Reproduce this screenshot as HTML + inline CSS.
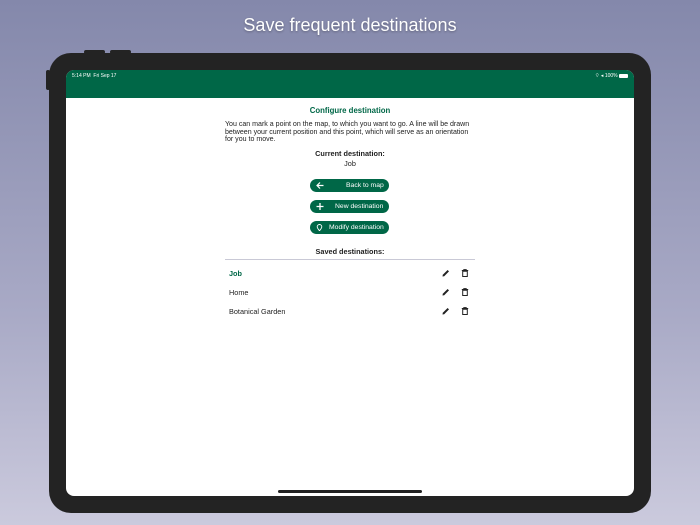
<!DOCTYPE html>
<html><head><style>
*{margin:0;padding:0;box-sizing:border-box}
body{width:700px;height:525px;overflow:hidden;background:linear-gradient(#8488ab,#a9aac6 60%,#cbcadd);font-family:"Liberation Sans",sans-serif;position:relative}
.title{position:absolute;top:15px;width:700px;text-align:center;color:#fff;font-size:18px;text-shadow:0 1px 2px rgba(0,0,0,.3)}
.dev{position:absolute;left:49px;top:53px;width:602px;height:460px;background:#232323;border-radius:22px}
.btnt{position:absolute;top:50px;height:4px;width:21px;background:#232323;border-radius:2px}
.side{position:absolute;left:46px;top:70px;width:4px;height:20px;background:#232323;border-radius:2px}
.scr{position:absolute;left:66px;top:70px;width:568px;height:426px;background:#fff;border-radius:8px;overflow:hidden}
.hdr{height:28px;background:#006747;color:#fff;font-size:5px;position:relative}
.hdr .l{position:absolute;left:6px;top:3px}.hdr .r{position:absolute;right:6px;top:3px}
.c{position:absolute;left:159px;width:250px;font-size:7.3px;color:#222}
.btn{position:absolute;left:244px;width:79px;height:13px;border-radius:7px;background:#006747;color:#fff;font-size:6.8px;line-height:14px}
.btn svg{position:absolute;left:6px;top:3px}
.row{position:absolute;left:163px;font-size:7.3px;color:#222}
.ic{position:absolute}
.bar{position:absolute;left:212px;top:420px;width:144px;height:3px;border-radius:2px;background:#222}
</style></head><body>
<div class="title">Save frequent destinations</div>
<div class="btnt" style="left:84px"></div><div class="btnt" style="left:110px"></div>
<div class="side"></div>
<div class="dev"></div>
<div class="scr">
<div class="hdr"><span class="l">5:14 PM &nbsp;Fri Sep 17</span><span class="r">⌔ ◂ 100% <span style="display:inline-block;width:9px;height:4px;background:#fff;border-radius:1px;vertical-align:middle"></span></span></div>
<div class="c" style="top:36px;text-align:center;color:#006747;font-weight:bold;font-size:7.8px">Configure destination</div>
<div class="c" style="top:51px;line-height:7.6px;font-size:7.05px;width:252px">You can mark a point on the map, to which you want to go. A line will be drawn between your current position and this point, which will serve as an orientation for you to move.</div>
<div class="c" style="top:79px;text-align:center;font-weight:bold">Current destination:</div>
<div class="c" style="top:89px;text-align:center">Job</div>
<div class="btn" style="top:109px"><svg width="8" height="7" viewBox="0 0 8 7"><path d="M7.5 3.5H1M4 0.5L1 3.5L4 6.5" stroke="#fff" stroke-width="1.2" fill="none"/></svg><span style="position:absolute;left:36px">Back to map</span></div>
<div class="btn" style="top:130px"><svg width="8" height="7" viewBox="0 0 8 7"><path d="M4 0V7M0.5 3.5H7.5" stroke="#fff" stroke-width="1.3"/></svg><span style="position:absolute;left:25px">New destination</span></div>
<div class="btn" style="top:151px"><svg width="7" height="7" viewBox="0 0 7 7"><path d="M3.5 6.8C2 5 1.2 4 1.2 2.8A2.3 2.3 0 0 1 5.8 2.8C5.8 4 5 5 3.5 6.8Z" stroke="#fff" stroke-width="0.9" fill="none"/></svg><span style="position:absolute;left:19px">Modify destination</span></div>
<div class="c" style="top:177px;text-align:center;font-weight:bold">Saved destinations:</div>
<div style="position:absolute;left:159px;top:189px;width:250px;height:1px;background:#c9c9d6"></div>
<div class="row" style="top:199px;color:#006747;font-weight:bold">Job</div>
<div class="row" style="top:218px">Home</div>
<div class="row" style="top:237px">Botanical Garden</div>
<svg class="ic" style="left:376px;top:199px" width="8" height="8" viewBox="0 0 8 8"><path d="M0.5 7.5L0.8 5.8L5.6 1L7 2.4L2.2 7.2Z" fill="#222"/></svg>
<svg class="ic" style="left:395px;top:199px" width="8" height="8" viewBox="0 0 8 8"><path d="M0.8 1.5H7.2M2.8 1.5V0.6H5.2V1.5M1.7 2.3H6.3V7.5H1.7Z" stroke="#222" stroke-width="1" fill="none"/></svg>
<svg class="ic" style="left:376px;top:218px" width="8" height="8" viewBox="0 0 8 8"><path d="M0.5 7.5L0.8 5.8L5.6 1L7 2.4L2.2 7.2Z" fill="#222"/></svg>
<svg class="ic" style="left:395px;top:218px" width="8" height="8" viewBox="0 0 8 8"><path d="M0.8 1.5H7.2M2.8 1.5V0.6H5.2V1.5M1.7 2.3H6.3V7.5H1.7Z" stroke="#222" stroke-width="1" fill="none"/></svg>
<svg class="ic" style="left:376px;top:237px" width="8" height="8" viewBox="0 0 8 8"><path d="M0.5 7.5L0.8 5.8L5.6 1L7 2.4L2.2 7.2Z" fill="#222"/></svg>
<svg class="ic" style="left:395px;top:237px" width="8" height="8" viewBox="0 0 8 8"><path d="M0.8 1.5H7.2M2.8 1.5V0.6H5.2V1.5M1.7 2.3H6.3V7.5H1.7Z" stroke="#222" stroke-width="1" fill="none"/></svg>
<div class="bar"></div>
</div>
</body></html>
